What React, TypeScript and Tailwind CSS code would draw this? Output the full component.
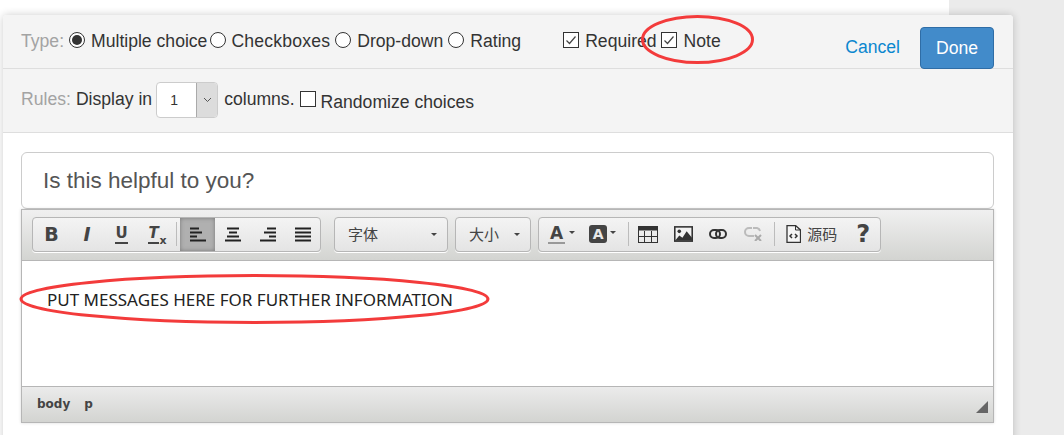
const sans = "font-['Liberation_Sans',Arial,sans-serif]";

function Radio({ on }: { on?: boolean }) {
  return (
    <span className="-mt-[1px] flex h-4 w-4 shrink-0 items-center justify-center rounded-full border border-[#333] bg-white">
      {on && <span className="h-[10px] w-[10px] rounded-full bg-[#333]" />}
    </span>
  );
}

function Check({ on }: { on?: boolean }) {
  return (
    <span className="-mt-[2px] flex h-4 w-4 shrink-0 items-center justify-center border border-[#333] bg-white">
      {on && (
        <svg width="12" height="12" viewBox="0 0 12 12" fill="none" stroke="#444" strokeWidth="1.2">
          <path d="M1.5 6.5 L4.5 9.5 L10.5 2.5" />
        </svg>
      )}
    </span>
  );
}

function Btn({ w, children, active }: { w: number; children: React.ReactNode; active?: boolean }) {
  return (
    <span
      style={{ width: w }}
      className={`flex h-full shrink-0 items-center justify-center ${
        active ? "bg-[#b0b0b0] shadow-[inset_0_0_4px_#777]" : ""
      }`}
    >
      {children}
    </span>
  );
}

function Sep({ h = 24 }: { h?: number }) {
  return <span style={{ height: h }} className="block w-px shrink-0 bg-[#bcbcbc]" />;
}

function AlignIcon({ kind }: { kind: "left" | "center" | "right" | "full" }) {
  const rows = {
    left: ["M0 1.5h9", "M0 5.5h12", "M0 9.5h7", "M0 13.5h16"],
    center: ["M2 1.5h12", "M4 5.5h8", "M2 9.5h12", "M0 13.5h16"],
    right: ["M7 1.5h9", "M4 5.5h12", "M9 9.5h7", "M0 13.5h16"],
    full: ["M0 1.5h16", "M0 5.5h16", "M0 9.5h16", "M0 13.5h16"],
  }[kind];
  return (
    <svg width="16" height="15" viewBox="0 0 16 15" stroke="#222" strokeWidth="2">
      {rows.map((d) => (
        <path key={d} d={d} />
      ))}
    </svg>
  );
}

function Caret() {
  return <span className="h-0 w-0 border-x-[3px] border-t-[3px] border-x-transparent border-t-[#444]" />;
}

function Group({ w, children, ml }: { w: number; ml: number; children: React.ReactNode }) {
  return (
    <div
      style={{ width: w, marginLeft: ml }}
      className="flex h-[35px] shrink-0 items-center overflow-hidden rounded-[4px] border border-[#b6b6b6] bg-[linear-gradient(#f4f4f4,#e4e4e4)] shadow-[0_1px_0_#fff]"
    >
      {children}
    </div>
  );
}

export default function App() {
  const icon = "font-['DejaVu_Sans',sans-serif] font-bold text-[#444]";
  const cjk = "font-['Noto_Sans_CJK_SC',sans-serif] text-[15px] text-[#444]";
  return (
    <div
      className={`${sans} relative h-[435px] w-[1064px] overflow-hidden bg-[linear-gradient(to_right,#fff_949px,#ebebeb_949px)] pl-[3px] pt-[15px] text-[#333]`}
    >
      <div className="h-[440px] w-[1010px] rounded-t-[4px] bg-white shadow-[0_0_8px_rgba(0,0,0,0.2)]">
        {/* settings rows */}
        <div className="relative flex h-[54px] items-start rounded-t-[4px] border-b border-[#dedede] bg-[#f4f4f4] pl-[18px] text-[17.6px] leading-[20px]">
          <div className="flex h-[52px] items-center pb-[1px]">
            <span className="text-[#a3a3a3]">Type:</span>
            <span className="ml-[5px]"><Radio on /></span>
            <span className="ml-[6px]">Multiple choice</span>
            <span className="ml-[3px]"><Radio /></span>
            <span className="ml-[5px] tracking-[0.2px]">Checkboxes</span>
            <span className="ml-[5px]"><Radio /></span>
            <span className="ml-[6px]">Drop-down</span>
            <span className="ml-[5px]"><Radio /></span>
            <span className="ml-[6px]">Rating</span>
            <span className="ml-[42px]"><Check on /></span>
            <span className="ml-[6px]">Required</span>
            <span className="ml-[4px]"><Check on /></span>
            <span className="ml-[7px]">Note</span>
          </div>
          <span className="ml-auto mt-[22px] text-[#0b87cf]">Cancel</span>
          <button className="relative z-10 ml-[20px] mr-[19px] mt-[12px] h-[42px] w-[74px] rounded-[4px] border border-[#2f6da6] bg-[#428bca] text-[17.6px] text-white">
            Done
          </button>
        </div>
        <div className="flex h-[64px] items-center border-b border-[#dedede] bg-[#f4f4f4] pl-[18px] text-[17.6px]">
          <span className="-mt-[2px] text-[#a3a3a3]">Rules:</span>
          <span className="-mt-[2px] ml-[5px]">Display in</span>
          <div className="ml-[4px] -mt-[1px] flex h-[36px] w-[62px] overflow-hidden rounded-[4px] border border-[#ccc] bg-white">
            <span className="flex flex-1 items-center pl-[13px] pt-[1px] text-[14px]">1</span>
            <span className="flex w-[21px] items-center justify-center border-l border-[#aaa] bg-[#dcdcdc]">
              <svg width="9" height="6" viewBox="0 0 9 6" fill="none" stroke="#555">
                <path d="M1 1 L4.5 4.5 L8 1" />
              </svg>
            </span>
          </div>
          <span className="-mt-[2px] ml-[6px]">columns.</span>
          <span className="ml-[5px] -mt-[1px]"><Check /></span>
          <span className="ml-[5px] mt-[3px]">Randomize choices</span>
        </div>

        {/* question + editor */}
        <div className="px-[18px] pt-[19px]">
          <div className="flex h-[57px] w-[973px] items-center rounded-[6px] border border-[#ccc] bg-white pl-[21px] text-[22.5px] text-[#555]">
            Is this helpful to you?
          </div>
          <div className="w-[973px] border border-[#b6b6b6] bg-white shadow-[0_0_3px_rgba(0,0,0,0.15)]">
            <div className="flex h-[51px] items-center border-b border-[#b6b6b6] bg-[linear-gradient(#f0f0f0,#d3d4d1)] pb-[2px]">
              <Group ml={10} w={289}>
                <Btn w={37}><span className={`${icon} text-[19px]`}>B</span></Btn>
                <Btn w={34}><span className={`${icon} text-[19px] italic`}>I</span></Btn>
                <Btn w={35}><span className={`${icon} border-b-2 border-[#444] text-[15px] leading-[17px]`}>U</span></Btn>
                <Btn w={34}>
                  <span className={`${icon} relative -ml-[5px] border-b-2 border-[#444] text-[15px] italic leading-[17px]`}>
                    T
                    <span className="absolute -right-[8px] bottom-[-4px] text-[11px] not-italic leading-none">x</span>
                  </span>
                </Btn>
                <span className="ml-[3px]"><Sep /></span>
                <span className="ml-[3px] h-full"><Btn w={35} active><AlignIcon kind="left" /></Btn></span>
                <Btn w={35}><AlignIcon kind="center" /></Btn>
                <Btn w={35}><AlignIcon kind="right" /></Btn>
                <Btn w={35}><AlignIcon kind="full" /></Btn>
              </Group>
              <Group ml={13} w={114}>
                <span className={`ml-[13px] ${cjk}`}>字体</span>
                <span className="ml-auto mr-[10px] flex"><Caret /></span>
              </Group>
              <Group ml={7} w={76}>
                <span className={`ml-[13px] ${cjk}`}>大小</span>
                <span className="ml-auto mr-[10px] flex"><Caret /></span>
              </Group>
              <Group ml={7} w={343}>
                <span className={`${icon} ml-[9px] border-b-2 border-[#999] px-[2px] text-[17px] leading-[17px]`}>A</span>
                <span className="ml-[4px] mt-[-3px] flex"><Caret /></span>
                <span className={`${icon} ml-[14px] flex h-[18px] w-[18px] items-center justify-center rounded-[3px] bg-[#444] text-[14px] text-[#e8e8e8]`}>A</span>
                <span className="ml-[3px] mt-[-3px] flex"><Caret /></span>
                <span className="ml-[12px]"><Sep /></span>
                <span className="ml-[9px] flex">
                  <svg width="20" height="17" viewBox="0 0 20 17" fill="none" stroke="#333">
                    <rect x="0.5" y="0.5" width="19" height="16" />
                    <path d="M0 2.5h20" strokeWidth="4" />
                    <path d="M0 10.500h20M6.500 5v12M13.500 5v12" />
                  </svg>
                </span>
                <span className="ml-[16px] flex">
                  <svg width="19" height="16" viewBox="0 0 18 15">
                    <rect width="18" height="15" fill="#333" />
                    <rect x="1.5" y="1.500" width="15" height="12" fill="#f2f2f2" />
                    <circle cx="5" cy="5" r="1.700" fill="#333" />
                    <path d="M1 14 L5 9 L8 11 L12 5 L17 11 V14 Z" fill="#333" />
                  </svg>
                </span>
                <span className="ml-[16px] flex">
                  <svg width="18" height="10" viewBox="0 0 18 10" fill="none" stroke="#333" strokeWidth="2">
                    <rect x="1" y="1" width="10" height="8" rx="4" />
                    <rect x="7" y="1" width="10" height="8" rx="4" />
                  </svg>
                </span>
                <span className="ml-[17px] flex">
                  <svg width="19" height="14" viewBox="0 0 19 14" fill="none" stroke="#bbb" strokeWidth="2">
                    <path d="M8 1H5a4 4 0 0 0 0 8h5M9 1h4a4 4 0 0 1 3 3" />
                    <path d="M11 8l6 6M17 8l-6 6" stroke="#aaa" />
                  </svg>
                </span>
                <span className="ml-[11px]"><Sep /></span>
                <span className="ml-[11px] flex">
                  <svg width="15" height="18" viewBox="0 0 15 18" fill="none" stroke="#333">
                    <path d="M1 .5h8.500L14.500 5v12.500H1z" fill="#f6f6f6" strokeWidth="1.300" />
                    <path d="M9.500 .5V5h5" />
                    <path d="M6 9l-2 2 2 2M9 9l2 2-2 2" strokeWidth="1.500" />
                  </svg>
                </span>
                <span className={`ml-[6px] ${cjk}`}>源码</span>
                <span className={`${icon} ml-[19px] text-[24px] leading-none`}>?</span>
              </Group>
            </div>
            <div className="h-[125px] pl-[25px] pt-[29px] font-['Noto_Sans',sans-serif] text-[17px] leading-[20px] text-[#222]">
              PUT MESSAGES HERE FOR FURTHER INFORMATION
            </div>
            <div className="flex h-[36px] items-center border-t border-[#b6b6b6] bg-[linear-gradient(#ebebeb,#d3d4d1)] pb-[2px] pl-[15px] font-['DejaVu_Sans',sans-serif] text-[12px] font-bold text-[#444]">
              <span>body</span>
              <span className="ml-[14px]">p</span>
              <svg className="ml-auto mr-[5px] mt-[6px]" width="12" height="12" viewBox="0 0 12 12">
                <path d="M12 0V12H0Z" fill="#666" />
              </svg>
            </div>
          </div>
        </div>
      </div>

      {/* hand-drawn annotations */}
      <svg className="pointer-events-none absolute left-0 top-0" width="1064" height="435" fill="none" stroke="#f33b3b" strokeWidth="3">
        <ellipse cx="697.500" cy="39.500" rx="55" ry="23" />
        <ellipse cx="254.500" cy="299" rx="233.500" ry="23.500" />
      </svg>
    </div>
  );
}
